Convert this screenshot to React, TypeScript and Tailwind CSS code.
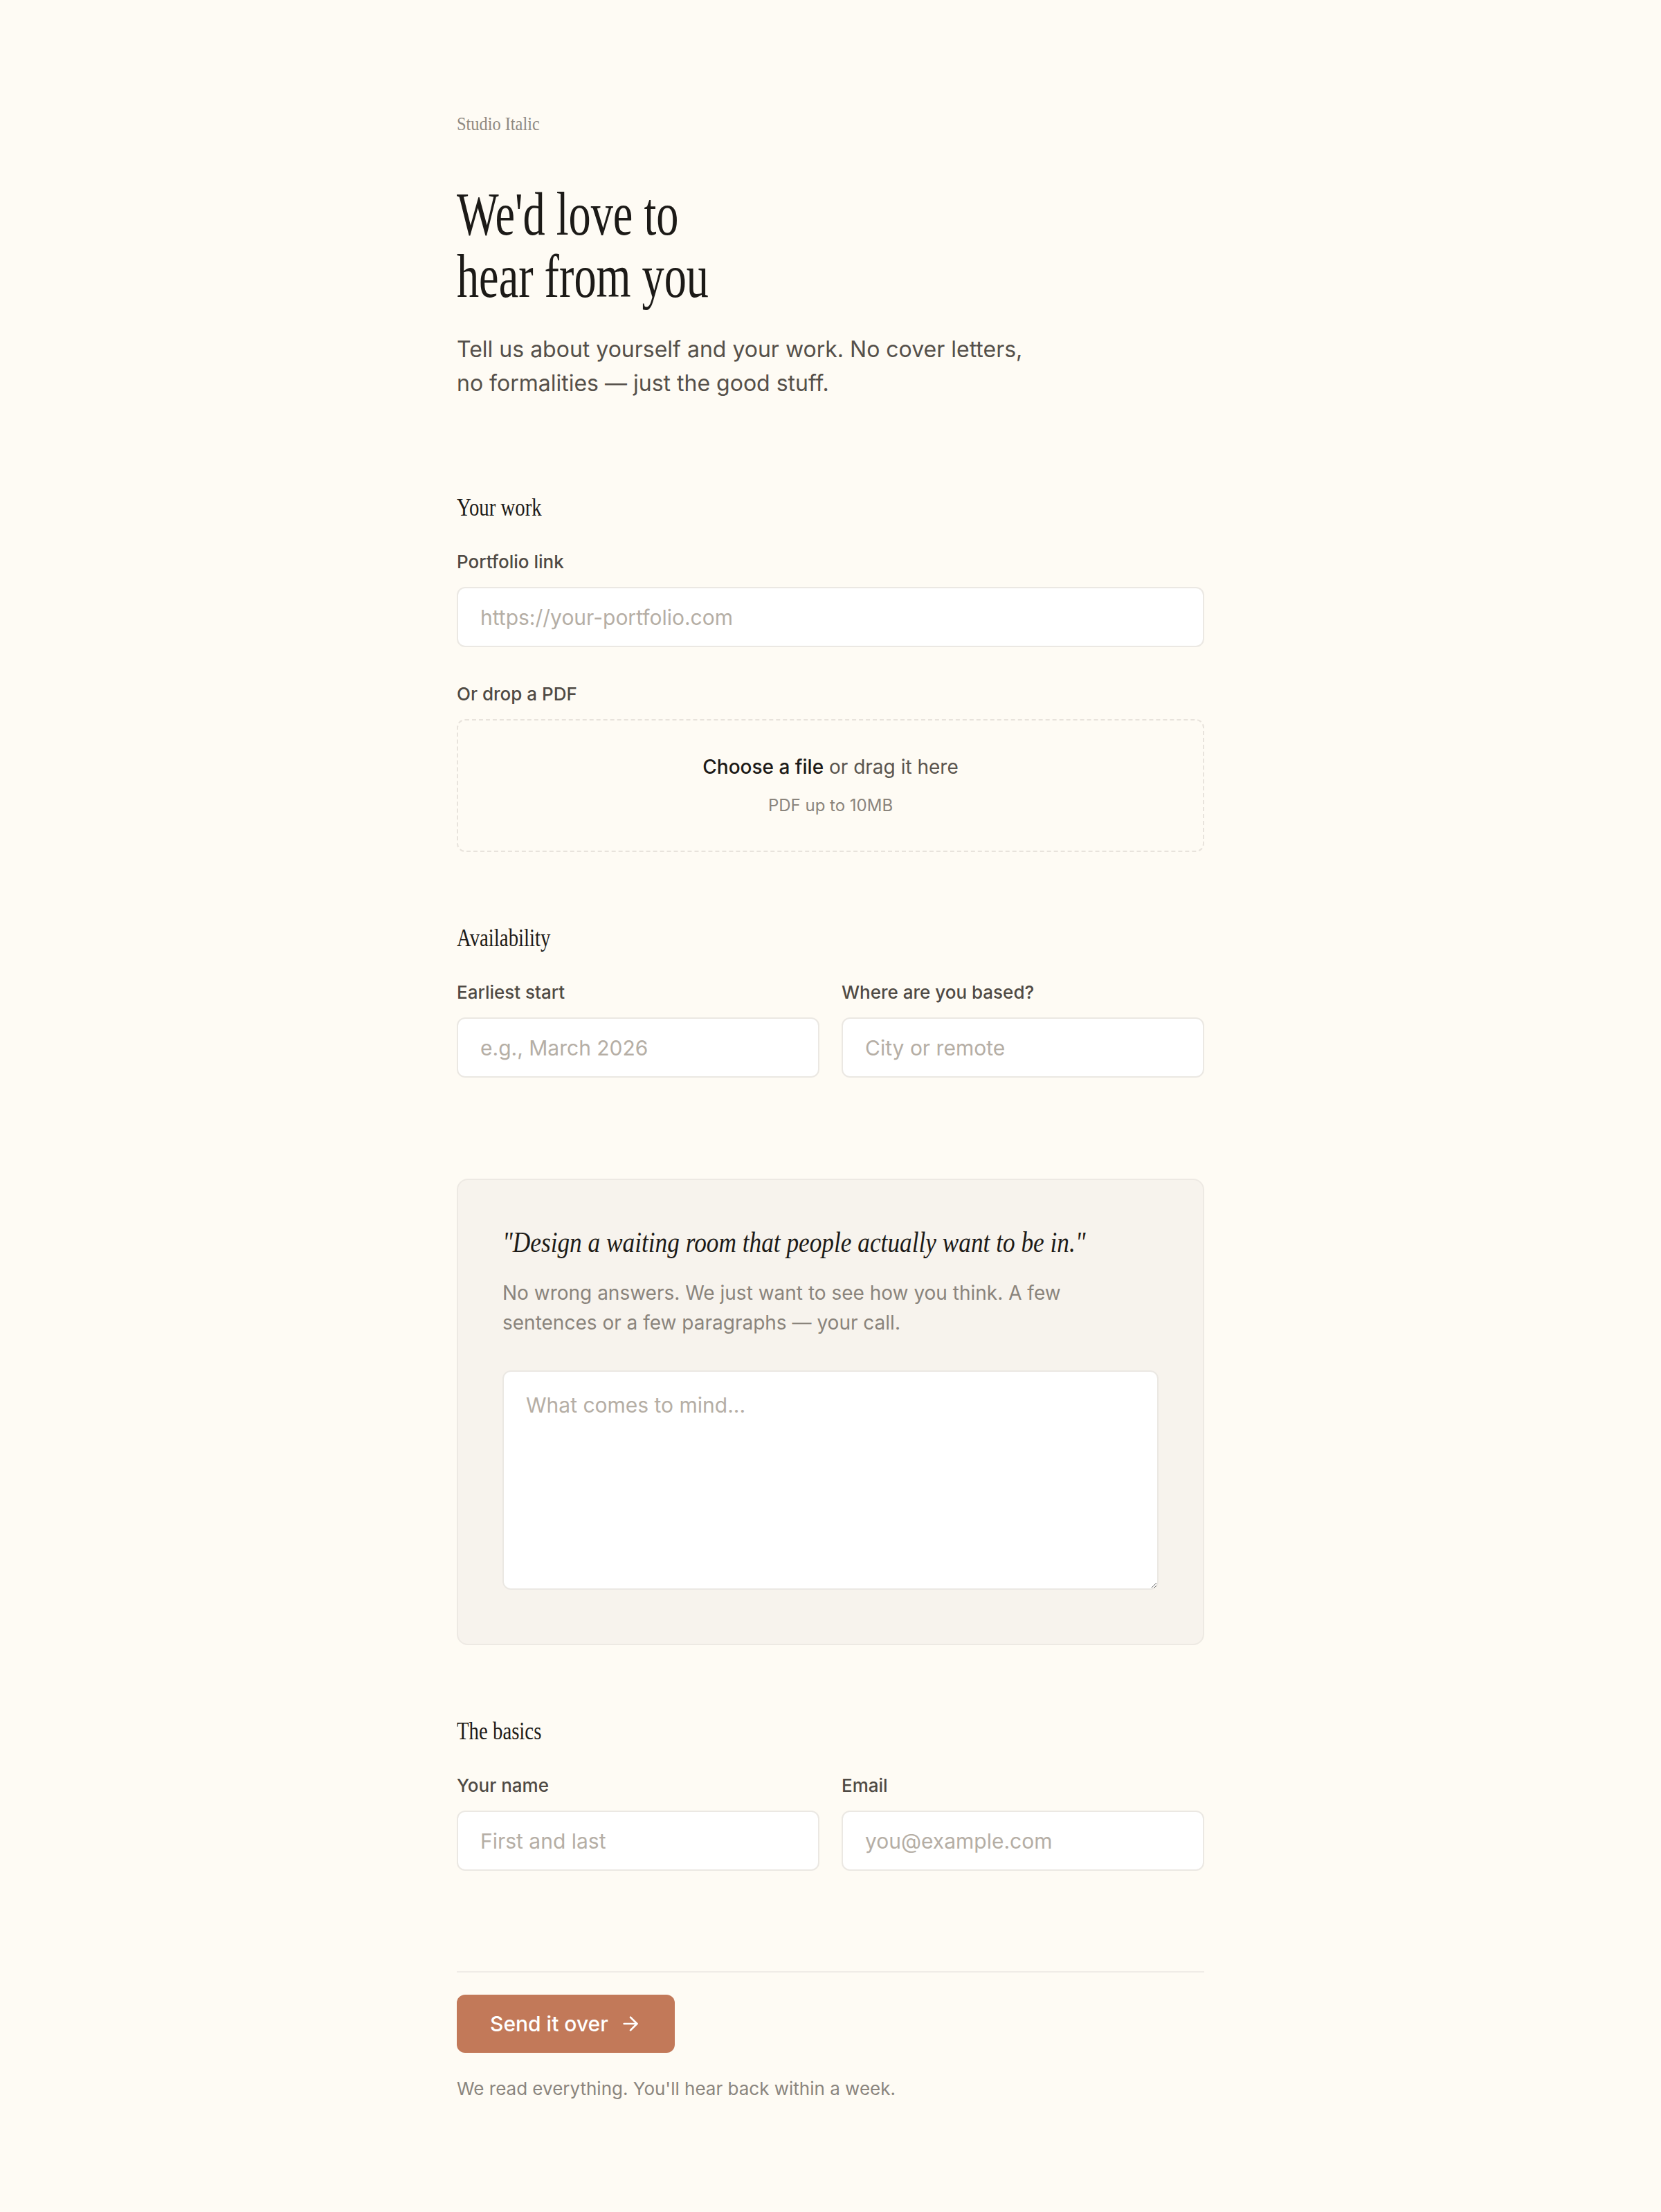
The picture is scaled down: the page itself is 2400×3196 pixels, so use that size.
import React from "react";
import { ArrowRight } from "lucide-react";

const serif = "font-['Liberation_Serif','Times_New_Roman',serif]";

function Label({ children }: { children: React.ReactNode }) {
  return (
    <label className="block text-[26px] leading-[40px] font-medium text-[#4f4a44] mb-[16px]">
      {children}
    </label>
  );
}

function TextInput({ placeholder }: { placeholder: string }) {
  return (
    <input
      type="text"
      placeholder={placeholder}
      className="block w-full h-[87px] rounded-[12px] border-2 border-[#ebe8e3] bg-white px-[32px] text-[30px] text-[#1c1a17] placeholder:text-[#b5aea5] outline-none font-['Inter',sans-serif]"
    />
  );
}

function SectionTitle({ children }: { children: React.ReactNode }) {
  return (
    <h2 className={`${serif} text-[36px] leading-[44px] text-[#1c1a17] origin-left scale-x-[0.8] mb-[37px]`}>
      {children}
    </h2>
  );
}

export default function App() {
  return (
    <div className="min-h-screen bg-[#fefbf4] font-['Inter',sans-serif] pt-[159px] pb-[161px]">
      <div className="mx-auto w-[1080px] flex flex-col">
        <header className="flex flex-col">
          <p className={`${serif} text-[28px] leading-[40px] text-[#8f8981] origin-left scale-x-[0.87]`}>
            Studio Italic
          </p>
          <h1 className={`${serif} mt-[66px] text-[88px] leading-[90px] text-[#1c1a17] origin-left scale-x-[0.73]`}>
            We'd love to
            <br />
            hear from you
          </h1>
          <p className="mt-[35px] text-[32px] leading-[49px] text-[#55504a]">
            Tell us about yourself and your work. No cover letters,
            <br />
            no formalities — just the good stuff.
          </p>
        </header>

        <section className="mt-[133px]">
          <SectionTitle>Your work</SectionTitle>
          <Label>Portfolio link</Label>
          <TextInput placeholder="https://your-portfolio.com" />
          <div className="mt-[48px]">
            <Label>Or drop a PDF</Label>
            <div className="rounded-[12px] border-2 border-dashed border-[#e8e3dc] pt-[46px] pb-[49px] flex flex-col items-center">
              <p className="text-[28px] leading-[42px] text-[#5a554f]">
                <span className="font-medium text-[#1c1a17]">Choose a file</span> or drag it here
              </p>
              <p className="mt-[19px] text-[24px] leading-[32px] text-[#8a847c]">PDF up to 10MB</p>
            </div>
          </div>
        </section>

        <section className="mt-[102px]">
          <SectionTitle>Availability</SectionTitle>
          <div className="grid grid-cols-2 gap-x-[32px]">
            <div>
              <Label>Earliest start</Label>
              <TextInput placeholder="e.g., March 2026" />
            </div>
            <div>
              <Label>Where are you based?</Label>
              <TextInput placeholder="City or remote" />
            </div>
          </div>
        </section>

        <section className="mt-[146px] rounded-[16px] border-2 border-[#ede9e3] bg-[#f7f3ed] px-[64px] pt-[64px] pb-[78px]">
          <p className={`${serif} italic text-[42px] leading-[52px] text-[#1c1a17] origin-left scale-x-[0.84] whitespace-nowrap`}>
            "Design a waiting room that people actually want to be in."
          </p>
          <p className="mt-[26px] text-[28px] leading-[43px] text-[#8a847c]">
            No wrong answers. We just want to see how you think. A few
            <br />
            sentences or a few paragraphs — your call.
          </p>
          <textarea
            placeholder="What comes to mind..."
            className="mt-[47px] block w-full h-[317px] rounded-[12px] border-2 border-[#ebe8e3] bg-white px-[32px] py-[24px] text-[30px] leading-[48px] text-[#1c1a17] placeholder:text-[#b5aea5] outline-none resize-y font-['Inter',sans-serif]"
          />
        </section>

        <section className="mt-[102px]">
          <SectionTitle>The basics</SectionTitle>
          <div className="grid grid-cols-2 gap-x-[32px]">
            <div>
              <Label>Your name</Label>
              <TextInput placeholder="First and last" />
            </div>
            <div>
              <Label>Email</Label>
              <TextInput placeholder="you@example.com" />
            </div>
          </div>
        </section>

        <div className="mt-[145px] border-t-2 border-[#f0ece7] pt-[32px] flex flex-col items-start">
          <button
            type="button"
            className="h-[84px] rounded-[12px] bg-[#c27959] px-[48px] flex items-center gap-[16px] text-[30px] font-medium text-white"
          >
            <span>Send it over</span>
            <ArrowRight size={32} strokeWidth={2} />
          </button>
          <p className="mt-[34px] text-[26px] leading-[36px] text-[#8a857e]">
            We read everything. You'll hear back within a week.
          </p>
        </div>
      </div>
    </div>
  );
}
